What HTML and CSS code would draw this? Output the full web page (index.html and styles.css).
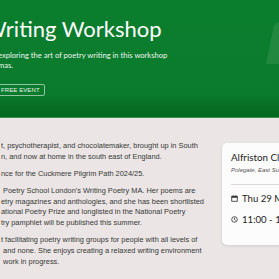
FILE: index.html
```html
<!DOCTYPE html>
<html lang="en">
<head>
    <meta charset="UTF-8">
    <meta name="viewport" content="width=device-width, initial-scale=1.0">
    <title>Poetry Writing Workshop</title>
    <link rel="stylesheet" href="styles.css">
</head>
<body>

    <header class="hero">
        <div class="hero-inner">
            <h1 class="hero-title">Writing Workshop</h1>
            <p class="hero-lead">exploring the art of poetry writing in this workshop<br>mas.</p>
            <div class="hero-actions"><span class="tag">FREE EVENT</span></div>
        </div>
        <svg class="hero-deco" width="20" height="80" viewBox="0 0 20 80">
            <polygon points="15,25 20,22 20,64 7,64" fill="#ffffff" fill-opacity="0.09"/>
        </svg>
    </header>

    <main class="content">
        <div class="bio">
            <p>t, psychotherapist, and chocolatemaker, brought up in South<br>n, and now at home in the south east of England.</p>
            <p>nce for the Cuckmere Pilgrim Path 2024/25.</p>
            <p>&nbsp;Poetry School London's Writing Poetry MA. Her poems are<br>etry magazines and anthologies, and she has been shortlisted<br>ational Poetry Prize and longlisted in the National Poetry<br>try pamphlet will be published this summer.</p>
            <p>t facilitating poetry writing groups for people with all levels of<br>&nbsp;and none. She enjoys creating a relaxed writing environment<br>&nbsp;work in progress.</p>
        </div>

        <aside class="card">
            <h2 class="card-title">Alfriston Clergy House</h2>
            <p class="card-place">Polegate, East Sussex</p>
            <hr class="card-rule">
            <div class="card-row">
                <svg class="icon" width="7" height="7" viewBox="0 0 14 14">
                    <rect x="1.5" y="2.5" width="11" height="10" fill="none" stroke="#2b2b2b" stroke-width="1.6"/>
                    <rect x="1.5" y="2.5" width="11" height="3" fill="#2b2b2b"/>
                    <rect x="3.5" y="0.5" width="1.6" height="3" fill="#2b2b2b"/>
                    <rect x="8.9" y="0.5" width="1.6" height="3" fill="#2b2b2b"/>
                </svg>
                <span>Thu 29 May</span>
            </div>
            <div class="card-row">
                <svg class="icon" width="7" height="7" viewBox="0 0 14 14">
                    <circle cx="7" cy="7" r="5.6" fill="none" stroke="#2b2b2b" stroke-width="1.6"/>
                    <path d="M7 3.6 V7.2 L9.6 8.8" fill="none" stroke="#2b2b2b" stroke-width="1.5"/>
                </svg>
                <span>11:00 - 13:00</span>
            </div>
        </aside>
    </main>

</body>
</html>
```

FILE: styles.css
```css
/* General page */
body {
    margin: 0;
    padding: 0;
    background-color: #ebe6e5;
    font-family: "Liberation Sans", Arial, sans-serif;
    overflow: hidden;
}

/* Green header */
.hero {
    position: relative;
    height: 117px;
    background: linear-gradient(to bottom, #0b7e2e 0%, #0a7b2c 80%, #05661f 100%);
    border-bottom: 1px solid #3a9452;
    color: #fff;
    overflow: hidden;
}

.hero-inner {
    padding-top: 16px;
}

.hero-title {
    margin: 0 0 8px -16px;
    font-family: Lato, "Open Sans", sans-serif;
    font-weight: 400;
    font-size: 22px;
    line-height: 26px;
}

.hero-lead {
    margin: 0 0 14px -2px;
    font-family: Lato, "Open Sans", sans-serif;
    font-size: 7.6px;
    line-height: 10px;
    color: #eef6ef;
}

.hero-actions {
    display: flex;
}

.tag {
    margin-left: -12px;
    padding: 0 4px 0 12px;
    border: 1px solid rgba(255, 255, 255, 0.55);
    border-radius: 2px;
    font-size: 6px;
    line-height: 10px;
    letter-spacing: 0.1px;
    color: #e8f3ea;
}

.hero-deco {
    position: absolute;
    top: 0;
    right: 0;
}

/* Main area */
.content {
    display: flex;
    gap: 17px;
    padding: 23px 0 0 1px;
}

.bio {
    flex: 0 0 204px;
    color: #363636;
    font-size: 7.4px;
    line-height: 10.7px;
    white-space: nowrap;
}

.bio p {
    margin: 0 0 6.4px;
}

/* Event card */
.card {
    flex: 0 0 200px;
    box-sizing: border-box;
    height: 102px;
    margin-top: 2px;
    padding: 8px 9px 0;
    background-color: #fdfcfc;
    border-radius: 5px;
    box-shadow: 0 1px 3px rgba(0, 0, 0, 0.12);
    font-family: Lato, "Open Sans", sans-serif;
    color: #232323;
    white-space: nowrap;
}

.card-title {
    margin: 0;
    font-weight: 400;
    font-size: 9.8px;
    line-height: 13px;
}

.card-place {
    margin: 2px 0 0;
    font-family: "Liberation Sans", Arial, sans-serif;
    font-style: italic;
    font-size: 6px;
    line-height: 9px;
    color: #555;
}

.card-rule {
    margin: 8.5px 0 7.5px;
    border: 0;
    border-top: 1px solid #dcd8d7;
}

.card-row {
    display: flex;
    align-items: center;
    gap: 4px;
    font-size: 9.6px;
    line-height: 13px;
    margin-bottom: 7.7px;
}

.icon {
    flex: 0 0 7px;
}
```
